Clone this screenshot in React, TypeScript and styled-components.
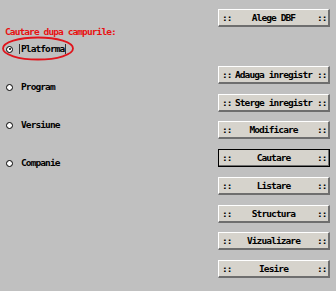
import styled, { createGlobalStyle } from 'styled-components'

const GlobalStyle = createGlobalStyle`
  html, body {
    margin: 0;
    padding: 0;
    background: #c0c0c0;
  }
`

const Window = styled.div`
  position: relative;
  width: 336px;
  height: 291px;
  display: flex;
  background: #c0c0c0;
  font-family: 'DejaVu Sans Mono', 'Liberation Mono', monospace;
  font-weight: bold;
  font-size: 9.5px;
  letter-spacing: -0.9px;
  color: #000;
  overflow: hidden;
`

const SearchPanel = styled.div`
  flex: 1;
  display: flex;
  flex-direction: column;
  padding: 27px 0 0 5px;
`

const Caption = styled.div`
  color: #e81010;
  line-height: 10px;
  white-space: pre;
`

const FieldList = styled.div`
  display: flex;
  flex-direction: column;
  gap: 28px;
  margin-top: 7px;
`

const FieldRow = styled.div`
  display: flex;
  align-items: center;
  height: 10px;
  padding-left: 1px;
`

const RadioDot = styled.span<{ $checked?: boolean }>`
  width: 7px;
  height: 7px;
  box-sizing: border-box;
  border: 1.5px solid #000;
  border-radius: 50%;
  background: #fff;
  display: flex;
  align-items: center;
  justify-content: center;
  &::after {
    content: '';
    width: 2px;
    height: 2px;
    border-radius: 50%;
    background: ${(p) => (p.$checked ? '#000' : 'transparent')};
  }
`

const FieldLabel = styled.span<{ $focused?: boolean }>`
  margin-left: ${(p) => (p.$focused ? '6px' : '7px')};
  padding: 0 1px;
  line-height: 10px;
  border-left: ${(p) => (p.$focused ? '1px solid #333' : 'none')};
  border-right: ${(p) => (p.$focused ? '1px solid #333' : 'none')};
`

const Annotation = styled.svg`
  position: absolute;
  left: 0;
  top: 34px;
  pointer-events: none;
`

const ButtonColumn = styled.div`
  width: 112px;
  margin-right: 6px;
  padding-top: 9px;
  display: flex;
  flex-direction: column;
  gap: 9.75px;
`

const Button = styled.div<{ $default?: boolean }>`
  height: 18px;
  box-sizing: border-box;
  display: flex;
  align-items: center;
  padding: 0 3px 0 3px;
  background: #d6d3cc;
  border-style: solid;
  border-width: 1px 2px 2px 1px;
  border-color: #ffffff #6e6e6e #6e6e6e #ffffff;
  outline: ${(p) => (p.$default ? '1px solid #000' : 'none')};
  outline-offset: -1px;
  white-space: pre;
  &:first-child {
    margin-bottom: 29px;
  }
`

const Grip = styled.span<{ $right?: boolean }>`
  width: 8px;
  text-align: ${(p) => (p.$right ? 'right' : 'left')};
`

const ButtonLabel = styled.span`
  flex: 1;
  text-align: center;
`

const fields = ['Platforma', 'Program', 'Versiune', 'Companie']

const actions = [
  'Alege DBF',
  'Adauga inregistr',
  'Sterge inregistr',
  'Modificare',
  'Cautare',
  'Listare',
  'Structura',
  'Vizualizare',
  'Iesire',
]

const App = () => {
  return (
    <Window>
      <GlobalStyle />
      <SearchPanel>
        <Caption>Cautare dupa campurile:</Caption>
        <FieldList>
          {fields.map((f, i) => (
            <FieldRow key={f}>
              <RadioDot $checked={i === 0} />
              <FieldLabel $focused={i === 0}>{f}</FieldLabel>
            </FieldRow>
          ))}
        </FieldList>
      </SearchPanel>
      <ButtonColumn>
        {actions.map((a) => (
          <Button key={a} $default={a === 'Cautare'}>
            <Grip>::</Grip>
            <ButtonLabel>{a}</ButtonLabel>
            <Grip $right>::</Grip>
          </Button>
        ))}
      </ButtonColumn>
      <Annotation width="80" height="30" viewBox="0 0 80 30">
        <ellipse cx="38" cy="14.5" rx="35" ry="11" fill="none" stroke="#e0141c" strokeWidth="1.8" />
      </Annotation>
    </Window>
  )
}

export default App
